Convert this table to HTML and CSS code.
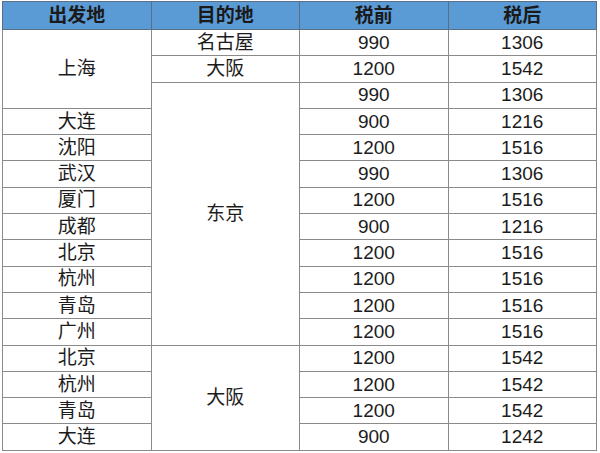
FILE: index.html
```html
<!DOCTYPE html>
<html lang="zh">
<head>
<meta charset="utf-8">
<link rel="stylesheet" href="styles.css">
</head>
<body>
<table class="fares">
  <colgroup><col class="c"><col class="c"><col class="c"><col class="c"></colgroup>
  <thead>
    <tr class="head"><th>出发地</th><th>目的地</th><th>税前</th><th>税后</th></tr>
  </thead>
  <tbody>
    <tr><td rowspan="3">上海</td><td>名古屋</td><td>990</td><td>1306</td></tr>
    <tr><td>大阪</td><td>1200</td><td>1542</td></tr>
    <tr><td rowspan="10">东京</td><td>990</td><td>1306</td></tr>
    <tr><td>大连</td><td>900</td><td>1216</td></tr>
    <tr><td>沈阳</td><td>1200</td><td>1516</td></tr>
    <tr><td>武汉</td><td>990</td><td>1306</td></tr>
    <tr><td>厦门</td><td>1200</td><td>1516</td></tr>
    <tr><td>成都</td><td>900</td><td>1216</td></tr>
    <tr><td>北京</td><td>1200</td><td>1516</td></tr>
    <tr><td>杭州</td><td>1200</td><td>1516</td></tr>
    <tr><td>青岛</td><td>1200</td><td>1516</td></tr>
    <tr><td>广州</td><td>1200</td><td>1516</td></tr>
    <tr><td>北京</td><td rowspan="4">大阪</td><td>1200</td><td>1542</td></tr>
    <tr><td>杭州</td><td>1200</td><td>1542</td></tr>
    <tr><td>青岛</td><td>1200</td><td>1542</td></tr>
    <tr><td>大连</td><td>900</td><td>1242</td></tr>
  </tbody>
</table>
</body>
</html>
```
FILE: styles.css
```css
html, body {
  margin: 0;
  padding: 0;
  background: #ffffff;
}
body {
  padding: 1px 0 0 2px;
}
.fares {
  border-collapse: collapse;
  table-layout: fixed;
  width: 595px;
  font-family: "Liberation Sans", "Noto Sans CJK SC", sans-serif;
  font-size: 19px;
  color: #1c1c1c;
}
.fares th,
.fares td {
  border: 1px solid #8a8a8a;
  padding: 0;
  text-align: center;
  vertical-align: middle;
  line-height: 20px;
  overflow: hidden;
  white-space: nowrap;
}
.fares .head th {
  background: #5b9bd5;
  font-weight: bold;
  height: 27px;
  color: #1a1a1a;
  border-color: #5a6f86;
}
.fares tbody tr {
  height: 26.3px;
}
```
